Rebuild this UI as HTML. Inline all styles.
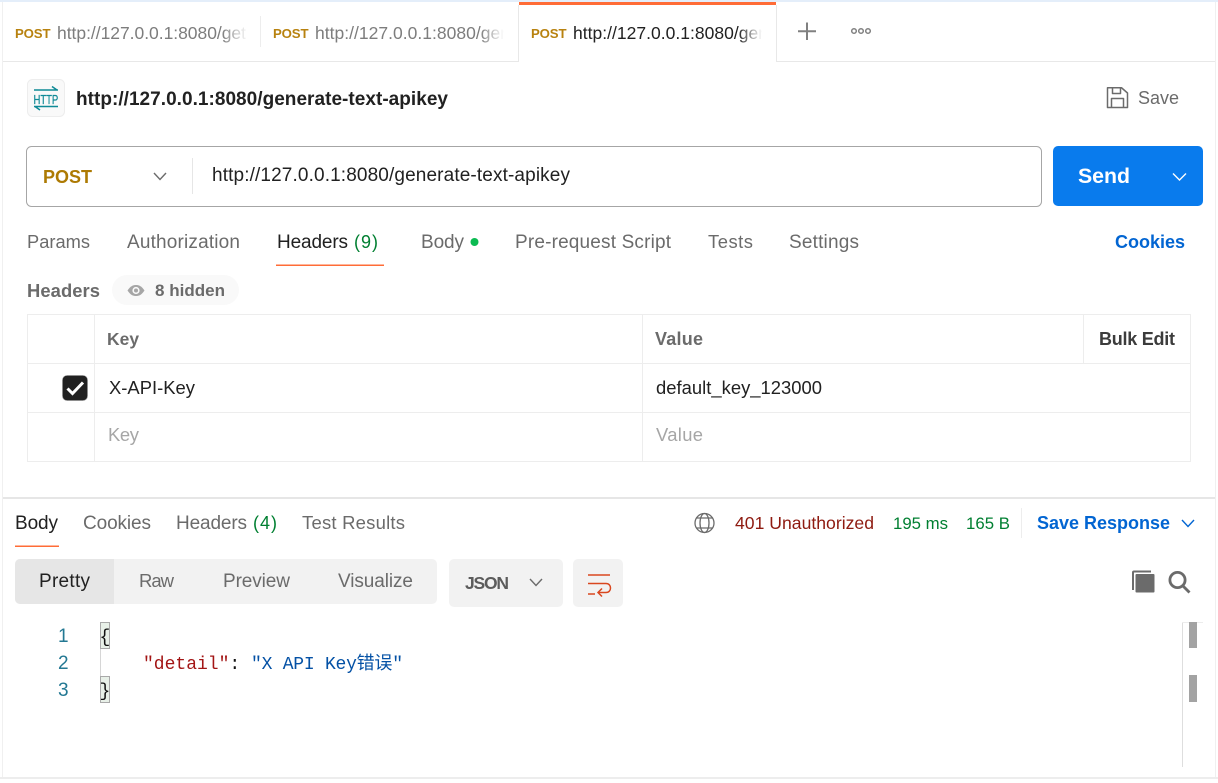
<!DOCTYPE html>
<html><head><meta charset="utf-8"><style>
html,body{margin:0;padding:0;background:#fff;width:1218px;height:783px;overflow:hidden}
svg{display:block}
text{font-family:"Liberation Sans","Noto Sans CJK SC",sans-serif;font-size:19px;fill:#6b6b6b;white-space:pre}
.b{font-weight:bold;font-size:18px}
.m{font-family:"Liberation Mono","Noto Sans CJK SC",monospace;font-size:18px}
.d{fill:#212121}
</style></head><body>
<svg width="1218" height="783" viewBox="0 0 1218 783" xmlns="http://www.w3.org/2000/svg">
<defs>
<linearGradient id="f"><stop offset="0" stop-color="#fff" stop-opacity="0"/><stop offset="1" stop-color="#fff"/></linearGradient>
</defs>
<rect width="1218" height="783" fill="#fff"/>
<!-- frame -->
<rect x="0" y="0" width="1218" height="2" fill="#e4eefa"/>
<rect x="2" y="2" width="1" height="776" fill="#f0f0f0"/>
<rect x="1215" y="2" width="1" height="776" fill="#f0f0f0"/>
<rect x="0" y="777" width="1218" height="2" fill="#ededed"/>
<!-- tab strip -->
<rect x="3" y="61" width="516" height="1" fill="#e8e8e8"/>
<rect x="776" y="61" width="439" height="1" fill="#e8e8e8"/>
<rect x="518" y="5" width="1" height="56" fill="#e8e8e8"/>
<rect x="776" y="5" width="1" height="56" fill="#e8e8e8"/>
<rect x="519" y="2" width="257" height="3" fill="#ff6c37"/>
<rect x="260" y="16" width="1" height="31" fill="#ededed"/>
<text class="b" x="15" y="38" style="font-size:13.200px;fill:#b8820f" textLength="35.500">POST</text>
<text x="57" y="39" textLength="189" lengthAdjust="spacing" style="font-size:17.500px;fill:#7d7d7d">http://127.0.0.1:8080/get</text>
<rect x="222" y="15" width="26" height="34" fill="url(#f)"/>
<text class="b" x="273" y="38" style="font-size:13.200px;fill:#b8820f" textLength="35.500">POST</text>
<text x="315" y="39" textLength="195" lengthAdjust="spacing" style="font-size:17.500px;fill:#7d7d7d">http://127.0.0.1:8080/gen</text>
<rect x="480" y="15" width="24" height="34" fill="url(#f)"/><rect x="504" y="15" width="12" height="34" fill="#fff"/>
<text class="b" x="531" y="38" style="font-size:13.200px;fill:#b8820f" textLength="35.500">POST</text>
<text class="d" x="573" y="39" textLength="195" lengthAdjust="spacing" style="font-size:17.500px">http://127.0.0.1:8080/gen</text>
<rect x="738" y="15" width="24" height="34" fill="url(#f)"/><rect x="762" y="15" width="12" height="34" fill="#fff"/>
<path d="M807 22.500V40M798 31.250H816" stroke="#808080" stroke-width="2" fill="none"/>
<g fill="none" stroke="#808080" stroke-width="1.500"><circle cx="854" cy="31" r="2.300"/><circle cx="861" cy="31" r="2.300"/><circle cx="868" cy="31" r="2.300"/></g>
<!-- title -->
<rect x="27.500" y="79.500" width="37" height="37" rx="5" fill="#f9f9f9" stroke="#ededed"/>
<g fill="none" stroke="#0f8a96" stroke-width="1.500">
<path d="M34 90H58M52 86.500L57 90"/>
<path d="M34 106.500H58M40 110L35 106.500"/>
</g>
<text transform="translate(33.500,104) scale(.73,1)" x="0" y="0" style="font-size:13px;fill:#0f8a96;stroke:#0f8a96;stroke-width:.25">HTTP</text>
<text class="b d" x="76" y="105" textLength="372" lengthAdjust="spacing" style="font-size:19px">http://127.0.0.1:8080/generate-text-apikey</text>
<g fill="none" stroke="#6b6b6b" stroke-width="1.500" stroke-linejoin="round">
<path d="M1107.500 87.750H1121.500L1127.500 93V107.500H1107.500Z"/>
<path d="M1112.500 88V93.500H1120.500V88"/>
<path d="M1111.500 107.500V98.500H1123.500V107.500"/>
</g>
<text x="1138" y="104" textLength="41" lengthAdjust="spacing" style="font-size:18px">Save</text>
<!-- url bar -->
<rect x="26.500" y="146.500" width="1015" height="60" rx="5" fill="#fff" stroke="#a6a6a6"/>
<rect x="192" y="158" width="1" height="36" fill="#e6e6e6"/>
<text class="b" x="43" y="183" textLength="49" style="fill:#ad7a03">POST</text>
<path d="M154 173L160 179.500L166 173" fill="none" stroke="#6b6b6b" stroke-width="1.400"/>
<text class="d" x="212" y="181" textLength="358" lengthAdjust="spacing">http://127.0.0.1:8080/generate-text-apikey</text>
<rect x="1053" y="146" width="150" height="60" rx="5" fill="#097bed"/>
<text class="b" x="1078" y="183" style="font-size:21.300px;fill:#fff" textLength="52">Send</text>
<path d="M1173 173.500L1179.500 180L1186 173.500" fill="none" stroke="#fff" stroke-width="1.400"/>
<!-- request tabs -->
<text x="27" y="248" textLength="63" style="font-size:18.300px">Params</text>
<text x="127" y="248" textLength="113">Authorization</text>
<text class="d" x="277" y="248" textLength="71">Headers</text>
<text x="354" y="248" textLength="24" style="font-size:18px;fill:#007f31">(9)</text>
<rect x="276" y="264.500" width="108" height="1.500" fill="#ff6c37"/>
<text x="421" y="248" textLength="43">Body</text>
<circle cx="474.500" cy="242" r="4" fill="#0cbb52"/>
<text x="515" y="248" textLength="156">Pre-request Script</text>
<text x="708" y="248" textLength="45" style="font-size:18.400px">Tests</text>
<text x="789" y="248" textLength="70">Settings</text>
<text class="b" x="1115" y="248" textLength="70" style="fill:#0265d2">Cookies</text>
<!-- headers -->
<text class="b" x="27" y="297" textLength="73" style="font-size:18.400px;fill:#6b6b6b">Headers</text>
<rect x="112" y="275" width="127" height="30" rx="15" fill="#f9f9f9"/>
<path d="M127.500 290.500C130.500 286 133 285 136 285C139 285 141.500 286 144.500 290.500C141.500 295 139 296 136 296C133 296 130.500 295 127.500 290.500Z" fill="#a6a6a6"/>
<circle cx="136" cy="290.500" r="3.600" fill="#f9f9f9"/><circle cx="136" cy="290.500" r="2" fill="#a6a6a6"/>
<text class="b" x="155" y="296" textLength="70" style="font-size:17px;fill:#6b6b6b">8 hidden</text>
<!-- table -->
<g fill="#ededed">
<rect x="27" y="314" width="1164" height="1"/>
<rect x="27" y="363" width="1164" height="1"/>
<rect x="27" y="412" width="1164" height="1"/>
<rect x="27" y="461" width="1164" height="1"/>
<rect x="27" y="314" width="1" height="148"/>
<rect x="94" y="314" width="1" height="148"/>
<rect x="642" y="314" width="1" height="148"/>
<rect x="1083" y="314" width="1" height="49"/>
<rect x="1190" y="314" width="1" height="148"/>
</g>
<text class="b" x="107" y="345" textLength="32" style="font-size:17.400px;fill:#6b6b6b">Key</text>
<text class="b" x="655" y="345" textLength="48" style="fill:#6b6b6b">Value</text>
<text class="b" x="1099" y="345" textLength="76" style="fill:#3c3c3c">Bulk Edit</text>
<rect x="62.500" y="375.500" width="25" height="25" rx="4.500" fill="#212121" stroke="#8c8c8c" stroke-width=".6"/>
<path d="M67.500 388.500L72.500 393.500L83 382.500" fill="none" stroke="#fff" stroke-width="3"/>
<text class="d" x="109" y="394" textLength="86" style="font-size:18.400px">X-API-Key</text>
<text class="d" x="656" y="394" textLength="166" style="font-size:18.400px">default_key_123000</text>
<text x="108" y="441" textLength="31" style="font-size:18.400px;fill:#a6a6a6">Key</text>
<text x="656" y="441" textLength="47" style="font-size:18.400px;fill:#a6a6a6">Value</text>
<!-- response -->
<rect x="3" y="497" width="1212" height="2" fill="#e6e6e6"/>
<text class="d" x="15" y="529" textLength="43">Body</text>
<rect x="15" y="545.500" width="44" height="1.500" fill="#ff6c37"/>
<text x="83" y="529" textLength="68">Cookies</text>
<text x="176" y="529" textLength="71">Headers</text>
<text x="253" y="529" textLength="24" style="font-size:18px;fill:#007f31">(4)</text>
<text x="302" y="529" textLength="103" style="font-size:18.500px">Test Results</text>
<g fill="none" stroke="#6b6b6b" stroke-width="1.300"><circle cx="704.500" cy="523" r="9.500"/><ellipse cx="704.500" cy="523" rx="4.500" ry="9.500"/><path d="M696 518H713M696 528H713"/></g>
<text x="735" y="529" textLength="139" style="font-size:17.600px;fill:#8e1a10">401 Unauthorized</text>
<text x="893" y="529" textLength="55" style="font-size:16.800px;fill:#007f31">195 ms</text>
<text x="966" y="529" textLength="44" style="font-size:16.800px;fill:#007f31">165 B</text>
<rect x="1021" y="508" width="1" height="30" fill="#ededed"/>
<text class="b" x="1037" y="529" textLength="133" style="fill:#0265d2">Save Response</text>
<path d="M1182 520L1188 526.500L1194 520" fill="none" stroke="#0265d2" stroke-width="1.400"/>
<!-- segment -->
<rect x="15" y="559" width="422" height="45" rx="5" fill="#f2f2f2"/>
<path d="M20 559H114V604H20A5 5 0 0 1 15 599V564A5 5 0 0 1 20 559Z" fill="#e6e6e6"/>
<text class="d" x="39" y="587" textLength="51">Pretty</text>
<text x="139" y="587" textLength="35" style="font-size:18.500px">Raw</text>
<text x="223" y="587" textLength="67">Preview</text>
<text x="338" y="587" textLength="75">Visualize</text>
<rect x="449" y="559" width="114" height="48" rx="5" fill="#f2f2f2"/>
<text class="b" x="465" y="589" textLength="44" style="font-size:17.500px;fill:#5c5c5c">JSON</text>
<path d="M530 579L536 585.500L542 579" fill="none" stroke="#6b6b6b" stroke-width="1.400"/>
<rect x="573" y="559" width="50" height="48" rx="5" fill="#f2f2f2"/>
<g fill="none" stroke="#d9471f" stroke-width="1.500"><path d="M588 575H610"/><path d="M588 583.500H606C612 583.500 612 592.500 606 592.500H599"/><path d="M602 588.500L598 592.500L602 596.500"/><path d="M588 594H595"/></g>
<!-- copy/search -->
<path d="M1133 590V572.500A1 1 0 0 1 1134 571.500H1151" fill="none" stroke="#6b6b6b" stroke-width="2"/>
<rect x="1135.500" y="574" width="19" height="18.500" rx="1" fill="#6b6b6b"/>
<g fill="none" stroke="#6b6b6b" stroke-width="2.800"><circle cx="1177.500" cy="580" r="7.600"/><path d="M1183 586L1189.500 592.500"/></g>
<!-- code -->
<text x="58" y="642" style="fill:#237893">1</text>
<text x="58" y="669" style="fill:#237893">2</text>
<text x="58" y="696" style="fill:#237893">3</text>
<rect x="100.500" y="622.500" width="9" height="26" fill="#e8f0e8" stroke="#a9a9a9"/>
<rect x="100.500" y="676.500" width="9" height="26" fill="#e8f0e8" stroke="#a9a9a9"/>
<rect x="100" y="649" width="1" height="27" fill="#d6d6d6"/>
<text class="m" x="99.500" y="642" style="fill:#111">{</text>
<text class="m" x="99.500" y="696" style="fill:#111">}</text>
<text class="m" x="143" y="669" style="fill:#a31515">"detail"</text>
<text class="m" x="229.400" y="669" style="fill:#111">:</text>
<text class="m" x="251" y="669" style="fill:#0451a5" textLength="152" lengthAdjust="spacing">"X API Key错误"</text>
<!-- scrollbar -->
<rect x="1182" y="622" width="1" height="145" fill="#dedede"/>
<rect x="1182" y="622" width="21" height="1" fill="#ececec"/>
<rect x="1189" y="622" width="8" height="26" fill="#a3a3a3"/>
<rect x="1189" y="675" width="8" height="27" fill="#a3a3a3"/>
</svg>
</body></html>
